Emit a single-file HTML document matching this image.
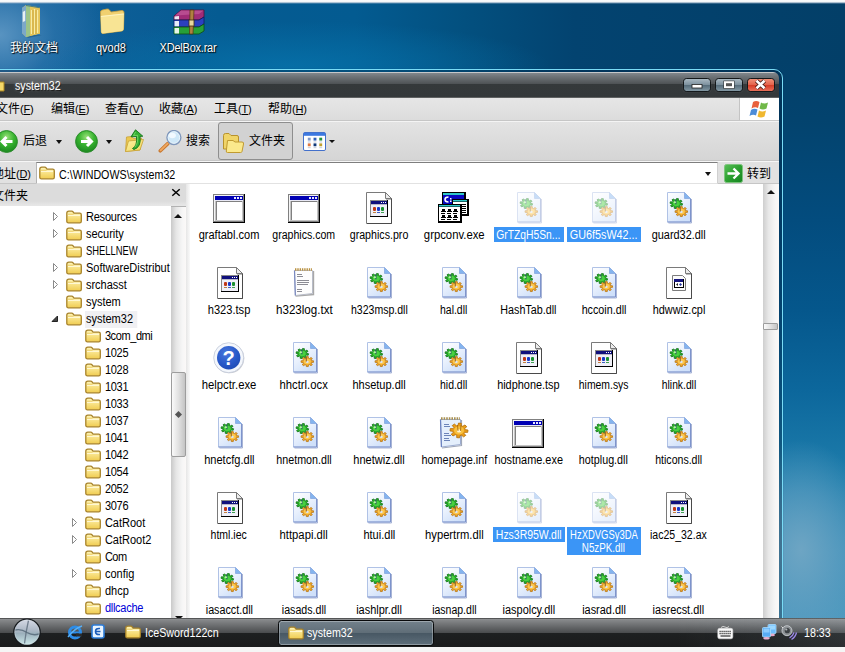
<!DOCTYPE html><html><head><meta charset="utf-8"><title>system32</title><style>html,body{margin:0;padding:0}
body{width:845px;height:652px;overflow:hidden;position:relative;background:#0a4b7c;font:11px "Liberation Sans","Noto Sans CJK SC",sans-serif;color:#000}
*{box-sizing:border-box}
#desk{position:absolute;left:0;top:0;width:845px;height:652px;
 background:
  radial-gradient(ellipse 260px 45px at 290px 66px,rgba(6,112,168,.9),rgba(4,104,160,0) 100%),
  radial-gradient(ellipse 110px 90px at 0px 35px,rgba(92,150,195,.95),rgba(50,120,175,.6) 50%,rgba(30,105,160,0) 100%),
  linear-gradient(90deg,#17649e 0%,#0e5e97 12%,#055b92 26%,#035b91 42%,#03507f 55%,#034370 68%,#033f68 100%);}
#rstrip{position:absolute;left:776px;top:60px;width:69px;height:558px;background:radial-gradient(ellipse 75px 110px at 25px 490px,rgba(112,166,196,.95),rgba(100,160,195,.55) 55%,rgba(60,140,185,0) 100%),linear-gradient(180deg,#03406a 0,#03436e 60px,#034c7e 160px,#05578c 250px,#0c679c 330px,#1f7eac 420px,#3c90b8 490px,#4a98bd 558px)}
#topline{position:absolute;left:0;top:0;width:845px;height:4px;background:linear-gradient(#fafbfc 0,#f2f4f6 2px,rgba(150,175,200,.7) 3px,rgba(60,110,160,0) 4px)}
.dicon{position:absolute;top:6px}
.dlabel{position:absolute;top:42px;width:90px;text-align:center;color:#fff;font-size:11px;line-height:13px;text-shadow:1px 1px 1px rgba(0,0,0,.9),0 0 2px rgba(0,0,0,.6)}
.dlabel{font-size:12px;transform:scaleX(.917);top:41.500px}
.dlabel.cn{font-size:12px;top:41.500px;transform:none}
#win{position:absolute;left:0;top:0;width:845px;height:618px;overflow:hidden}
#frame{position:absolute;left:-12px;top:69px;width:795px;height:600px;border:1px solid #7adcf6;border-radius:9px;background:rgba(0,25,50,.32);box-shadow:0 0 1px rgba(0,40,80,.5)}
#frame2{display:none}
#title{position:absolute;left:0;top:72px;width:779px;height:26px;border-radius:0 6px 0 0;background:linear-gradient(#c6c8ca 0,#c6c8ca 1px,#81878c 1px,#6c7175 5px,#4e5255 12px,#35393b 12px,#34383a 25px,#8a8a8a 26px)}
#title .t{position:absolute;left:14.500px;top:6.800px;color:#fff;font-size:12px;line-height:14px;transform:scaleX(.89);transform-origin:0 50%;text-shadow:0 0 3px #fff8,1px 1px 1px #000}
.cb{position:absolute;top:77.5px;height:14px;width:28px;border-radius:3.5px;border:1.5px solid #14181a;box-shadow:0 0 1px rgba(255,255,255,.25)}
#bmin{left:683px;background:linear-gradient(#a9b8c2,#7d919e 48%,#566c7a 52%,#8297a3)}
#bmax{left:715px;background:linear-gradient(#a9b8c2,#7d919e 48%,#566c7a 52%,#8297a3)}
#bclose{left:747px;background:linear-gradient(#f09078,#e4644c 48%,#d63c26 52%,#e8705a)}
#menubar{position:absolute;left:0;top:98px;width:779px;height:23px;background:linear-gradient(#e6e6e6,#dcdcdc);border-bottom:1px solid #c6c6c6}
#menubar>span{position:absolute;top:4px;font-size:12px;line-height:14px;white-space:nowrap}
#flag{position:absolute;left:739px;top:98px;width:40px;height:23px;background:#fff;border-left:1px solid #c4c4c4;border-bottom:1px solid #c9c9c9}
#toolbar{position:absolute;left:0;top:121px;width:779px;height:40px;background:linear-gradient(#e3e3e3,#d5d5d5);border-top:1px solid #f4f4f4;border-bottom:1px solid #c6c6c6}
#toolbar .lb{position:absolute;font-size:12px;line-height:14px;top:12px;white-space:nowrap}
#addr{position:absolute;left:0;top:161px;width:779px;height:23px;background:#e1e1e1;border-top:1px solid #f6f6f6;border-bottom:1px solid #c6c6c6}
#addr .lb{position:absolute;font-size:12px;line-height:14px;white-space:nowrap}
#addrbox{position:absolute;left:36px;top:0px;width:682px;height:22px;background:#fff;border:1px solid #b4b4b4;border-top-color:#7e7e7e;border-bottom-color:#e2e2e2;border-right-color:#d0d0d0}
#addrbox .p{position:absolute;left:21.600px;top:4.500px;font-size:12px;line-height:14px;white-space:nowrap;transform:scaleX(.89);transform-origin:0 50%}
#fhead{position:absolute;left:0;top:184px;width:186px;height:23px;background:linear-gradient(#dcdcdc 0,#dcdcdc 17px,#e6e6e6 21px);border-bottom:1px solid #b2b2b2}
#fhead .lb{position:absolute;left:-8px;top:5px;font-size:12px;line-height:14px}
#split{position:absolute;left:186px;top:184px;width:4px;height:434px;background:linear-gradient(90deg,#e6e6e6,#fafafa)}
#tree{position:absolute;left:0;top:206px;width:171px;height:412px;background:#fff;overflow:hidden}
#tree .tw,#tree .tf{position:absolute}
#tree .tl{position:absolute;font-size:12px;line-height:15px;white-space:nowrap;padding:0 1px;transform:scaleX(.917);transform-origin:0 50%}
#tree .tl.blue{color:#0000d8}
#tree .tl.tsel{background:#f0f0f3;padding:1px 5px 1px 1px;margin-top:-1px}
#treesb{position:absolute;left:171px;top:207px;width:15px;height:411px;background:linear-gradient(90deg,#c9c9c9,#e6e6e6 35%,#f6f6f6 75%,#fbf9f8)}
#files{position:absolute;left:190px;top:184px;width:573px;height:434px;background:#fff;overflow:hidden}
#files .ic{position:absolute}
#files .fl{position:absolute;width:100px;text-align:center;font-size:12px;line-height:13px;white-space:nowrap}
#files .fl span.b{padding:1px 3px;display:inline-block}
#files .fl span.b.sel{background:#3b95f6;color:#fff}
#filesb{position:absolute;left:763px;top:184px;width:16px;height:434px;background:linear-gradient(90deg,#cecece,#e8e8e8 35%,#f6f6f6 75%,#fcf9f7)}
.sbup,.sbdn{position:absolute;left:0;width:100%;height:17px}
.sbup{top:0}.sbdn{bottom:0}#treesb .sbdn{bottom:-10px}#treesb .sbup:after{top:7px}
.sbup:after{content:"";position:absolute;left:50%;top:6px;margin-left:-4.5px;border:4px solid transparent;border-top:0;border-bottom:4px solid #111}
.sbdn:after{content:"";position:absolute;left:50%;top:5px;margin-left:-4px;border:4px solid transparent;border-bottom:0;border-top:4px solid #111}
.thumb{position:absolute;left:0;width:100%;border:1px solid #9d9d9d;border-radius:2px;background:linear-gradient(90deg,#fafafa,#e1e1e1 50%,#c4c4c4)}
#treesb .thumb{top:165px;height:85px}
#filesb .thumb{top:139px;height:7px;width:14.500px;border-radius:1px}
#taskbar{position:absolute;left:0;top:618px;width:845px;height:29.300px;background:linear-gradient(90deg,rgba(255,255,255,0) 0,rgba(255,255,255,0) 80%,rgba(200,225,240,.1) 100%),linear-gradient(#2c2c2c 0,#8e9092 1.200px,#86888a 2px,#6e7072 7px,#4b4d4f 14.500px,#1e2021 14.500px,#1a1b1c 29px)}
#taskbar .lb{position:absolute;color:#fff;font-size:12px;line-height:14px;top:7.500px;white-space:nowrap;transform:scaleX(.89);transform-origin:0 50%}
#under{position:absolute;left:0;top:647.3px;width:845px;height:5px;background:#f5f5f5}
#tbtn{position:absolute;left:277.500px;top:2px;width:156.500px;height:26px;border:1.500px solid #08090a;border-radius:3.500px;background:linear-gradient(#73818b,#606e78 48%,#485864 52%,#5e6e7a);box-shadow:inset 0 0 0 1px rgba(255,255,255,.3)}
.dd{position:absolute;width:0;height:0;border:3.5px solid transparent;border-bottom:0;border-top:4px solid #111}
.dd.s{border-width:2.5px;border-top-width:3px}
#fbtn{position:absolute;left:218px;top:0px;width:75px;height:38px;border:1px solid #8e8e8e;border-radius:3px;background:#d2d2d2}
.la{font-size:11px;letter-spacing:-.2px}
.la u{text-decoration:underline;text-underline-offset:1px}
#treesb .thumb i{position:absolute;left:50%;top:50%;width:5px;height:5px;margin:-3px 0 0 -2.500px;background:#555;transform:rotate(45deg)}
.dd.m{border-width:3px;border-top-width:3.500px;border-bottom:0}
.sx{display:inline-block;white-space:nowrap}
#files .sx{position:relative;top:1px}
</style></head><body>
<svg width="0" height="0" style="position:absolute"><defs>
<linearGradient id="gfold" x1="0" y1="0" x2="0" y2="1"><stop offset="0" stop-color="#fff6b8"/><stop offset="1" stop-color="#f0cc50"/></linearGradient>
<g id="fold"><path d="M0.800 3.200 Q0.800 1.200 2.800 1.200 L5.600 1.200 Q6.600 1.200 7.300 2.200 L8 3.200 L13.700 3.200 Q15.300 3.200 15.300 4.800 L15.300 11.200 Q15.300 12.800 13.700 12.800 L2.400 12.800 Q0.800 12.800 0.800 11.200 Z" fill="url(#gfold)" stroke="#a8832a" stroke-width="1.300"/><path d="M2 5.300 L14 5.300" stroke="#fffbe0" stroke-width="1.100"/><path d="M1.800 4.300 L7.500 4.300" stroke="#e8c860" stroke-width=".8"/></g>
<g id="i-win"><rect x="0" y="2" width="32" height="29" fill="#000"/><rect x="0" y="2" width="31" height="28" fill="#808080"/><rect x="1" y="3" width="30" height="27" fill="#808080"/><rect x="1" y="3" width="29" height="26" fill="#f4f4f4"/><rect x="2" y="4" width="28" height="25" fill="#c4c4c4"/><rect x="2" y="4" width="28" height="4" fill="#0000b4"/><rect x="2" y="8" width="28" height="1" fill="#e8e8f4"/><rect x="3" y="9" width="26" height="19" fill="#808080"/><rect x="4" y="10" width="25" height="18" fill="#fff"/><rect x="21" y="5" width="2" height="2" fill="#e8e8ff"/><rect x="24" y="5" width="2" height="2" fill="#e8e8ff"/><rect x="27" y="5" width="2" height="2" fill="#e8e8ff"/></g>
<g id="page"><path d="M4.500 0.500 L23.500 0.500 L29.500 6.500 L29.500 31.500 L4.500 31.500 Z" fill="#fff" stroke="#7a7a7a"/><path d="M29.500 6 L29.500 31.500 L5 31.500" fill="none" stroke="#4a4a4a"/><path d="M23.500 0.500 L23.500 6.500 L29.500 6.500 Z" fill="#ececec" stroke="#7a7a7a"/><path d="M24 7.500 L29 7.500" stroke="#bbb"/></g>
<g id="miniwin"><rect x="8" y="8" width="18" height="17" fill="#000"/><rect x="8" y="8" width="17" height="16" fill="#888"/><rect x="9" y="9" width="16" height="15" fill="#f0f0f8"/><rect x="9" y="9" width="16" height="3" fill="#10107c"/><rect x="19" y="10" width="1" height="1" fill="#fff"/><rect x="21" y="10" width="1" height="1" fill="#fff"/><rect x="23" y="10" width="1" height="1" fill="#fff"/><rect x="9" y="12" width="16" height="1" fill="#b8b8c8"/><rect x="11" y="15" width="3" height="4" rx="1" fill="#c03818"/><rect x="15" y="15" width="3" height="4" rx="1" fill="#1838c8"/><rect x="19" y="15" width="3" height="4" rx="1" fill="#189030"/><rect x="11" y="20" width="3" height="1" fill="#c08040"/><rect x="15" y="20" width="3" height="1" fill="#4060c0"/><rect x="19" y="20" width="3" height="1" fill="#40a050"/></g>
<g id="i-pic"><use href="#page"/><use href="#miniwin"/></g>
<g id="i-cpl"><use href="#page"/><path d="M10.500 8.500 L20.500 8.500 L23.500 11.500 L23.500 23.500 L10.500 23.500 Z" fill="#fbfbfb" stroke="#7c7c7c"/><rect x="12" y="12" width="10" height="9" fill="#000"/><rect x="12" y="12" width="9" height="3" fill="#14147c"/><rect x="13" y="15" width="8" height="5" fill="#fff"/><path d="M14 17.500 l2 -1.500 v3 z" fill="#222"/><path d="M18.500 16 l1.500 1.500 l-1.500 1.500 l-1.500 -1.500 z" fill="#2838a0"/></g>
<linearGradient id="gdll" x1="0" y1="0" x2=".6" y2="1"><stop offset="0" stop-color="#ffffff"/><stop offset=".5" stop-color="#ebf2fd"/><stop offset="1" stop-color="#cfe0fa"/></linearGradient>
<g id="i-dll"><path d="M6.500 31 L29.500 31 L29.500 7" fill="none" stroke="#8c9cc8" stroke-opacity=".75"/><path d="M5.500 0.500 L22.500 0.500 L28.500 6.500 L28.500 30 L5.500 30 Z" fill="url(#gdll)" stroke="#b0c2e6"/><path d="M28.500 6.500 L28.500 30 L5.500 30" fill="none" stroke="#7e94cc"/><path d="M22.500 0.500 L22.500 6.500 L28.500 6.500 Z" fill="#84b4ee" stroke="#90b0e4"/>
<g transform="translate(0,2.3) scale(1,.8)"><path d="M20.59 11.77 L20.20 13.70 L18.25 13.43 L17.58 14.43 L18.56 16.14 L16.92 17.23 L15.73 15.66 L14.54 15.89 L14.03 17.79 L12.10 17.40 L12.37 15.45 L11.37 14.78 L9.66 15.76 L8.57 14.12 L10.14 12.93 L9.91 11.74 L8.01 11.23 L8.40 9.30 L10.35 9.57 L11.02 8.57 L10.04 6.86 L11.68 5.77 L12.87 7.34 L14.06 7.11 L14.57 5.21 L16.50 5.60 L16.23 7.55 L17.23 8.22 L18.94 7.24 L20.03 8.88 L18.46 10.07 L18.69 11.26 Z" fill="#28b028" stroke="#107418" stroke-width=".9"/><circle cx="14.300" cy="11.500" r="3.400" fill="#48d040"/><path d="M13.800 6.500 L13.800 12.500" stroke="#2c5c64" stroke-width="1.300"/><circle cx="12.800" cy="10" r="1.300" fill="#b8f0a8"/></g>
<g transform="translate(0,3.9) scale(1,.8)"><path d="M25.52 18.61 L25.52 20.59 L23.56 20.71 L23.10 21.82 L24.40 23.30 L23.00 24.70 L21.52 23.40 L20.41 23.86 L20.29 25.82 L18.31 25.82 L18.19 23.86 L17.08 23.40 L15.60 24.70 L14.20 23.30 L15.50 21.82 L15.04 20.71 L13.08 20.59 L13.08 18.61 L15.04 18.49 L15.50 17.38 L14.20 15.90 L15.60 14.50 L17.08 15.80 L18.19 15.34 L18.31 13.38 L20.29 13.38 L20.41 15.34 L21.52 15.80 L23.00 14.50 L24.40 15.90 L23.10 17.38 L23.56 18.49 Z" fill="#f0a828" stroke="#b87818" stroke-width=".9"/><circle cx="19.300" cy="19.600" r="3.400" fill="#fcc850"/><circle cx="19.300" cy="20" r="1.400" fill="#d8e4f8"/><path d="M18.300 14 L18.300 19.500" stroke="#94682c" stroke-width="1.100"/></g></g>
<g id="i-grp"><rect x="5" y="0" width="24" height="14" fill="#000"/><rect x="6" y="1" width="21" height="2" fill="#30c8c8"/><rect x="6" y="3" width="21" height="11" fill="#0808c0"/><path d="M11.500 5 Q8 5 8 7.500 Q8 10 11.500 10" fill="none" stroke="#fff" stroke-width="1.600"/><rect x="13" y="6" width="1.500" height="1.500" fill="#fff"/><rect x="13" y="8.500" width="1.500" height="1.500" fill="#fff"/>
<rect x="15" y="7" width="17" height="17" fill="#000"/><rect x="16" y="8" width="14" height="1.500" fill="#30c8c8"/><rect x="16" y="10" width="14" height="12" fill="#fff"/><path d="M25 12.500 h4 M25 14.500 h4 M25 16.500 h4 M25 18.500 h4 M25 20.500 h4" stroke="#000" stroke-width="1"/>
<rect x="1" y="12" width="24" height="19" fill="#000"/><rect x="2" y="13" width="21" height="1.500" fill="#30c8c8"/><rect x="2" y="15" width="21" height="14" fill="#fff"/>
<g fill="#000"><rect x="5" y="17" width="3" height="2"/><rect x="11" y="17" width="3" height="2"/><rect x="17" y="17" width="3" height="2"/><rect x="4" y="19" width="5" height="1"/><rect x="10" y="19" width="5" height="1"/><rect x="16" y="19" width="5" height="1"/><rect x="4" y="21" width="4" height="1"/><rect x="10" y="21" width="4" height="1"/><rect x="16" y="21" width="4" height="1"/><rect x="5" y="23" width="3" height="2"/><rect x="11" y="23" width="3" height="2"/><rect x="17" y="23" width="3" height="2"/><rect x="4" y="25" width="5" height="1"/><rect x="10" y="25" width="5" height="1"/><rect x="16" y="25" width="5" height="1"/><rect x="4" y="27" width="4" height="1"/><rect x="10" y="27" width="4" height="1"/><rect x="16" y="27" width="4" height="1"/></g></g>
<g id="i-txt"><path d="M7.500 29 L25.500 27.500 L25.500 4" fill="none" stroke="#a8a8a8" stroke-width="1.400"/><path d="M6.500 3.500 L24.500 3.500 L24.500 26.500 L7.500 28.500 Z" fill="#fdfdfd" stroke="#b8bcc8"/><path d="M6.500 3.500 L7.300 28.500" stroke="#7888c0" stroke-width="1.200"/><path d="M7 2.500 h17" stroke="#b89040" stroke-width="2.400" stroke-dasharray="1.400 .9"/><path d="M9 7.500 h5 M9 9.500 h6 M9 13.500 h12 M9 15.500 h12 M9 17.500 h11 M9 22.500 h5 M9 24.500 h5" stroke="#8c8c94"/></g>
<radialGradient id="ghelp" cx=".4" cy=".3" r=".8"><stop offset="0" stop-color="#4878dc"/><stop offset=".6" stop-color="#2858c8"/><stop offset="1" stop-color="#1c48b0"/></radialGradient>
<g id="i-help"><circle cx="16.300" cy="16.300" r="15" fill="#b0b4bc" opacity=".7"/><circle cx="15.700" cy="15.700" r="15" fill="#f4f7fc" stroke="#c0c8d8" stroke-width=".8"/><circle cx="15.700" cy="15.800" r="11.700" fill="url(#ghelp)"/><text x="15.700" y="23" text-anchor="middle" font-family="Liberation Sans,sans-serif" font-weight="bold" font-size="20" fill="#fff">?</text></g>
<g id="i-inf"><path d="M5 31 L24.500 28.500 L24.500 3" fill="none" stroke="#a0a8b8" stroke-width="1.200"/><path d="M3.500 2.500 L23.500 2.500 L23.500 27.500 L4.500 30 Z" fill="#e4effc" stroke="#9cacd0"/><path d="M3.500 2.500 L4.400 30" stroke="#6880c0" stroke-width="1.200"/><path d="M4 1.500 h19" stroke="#a89050" stroke-width="2.600" stroke-dasharray="1.600 1"/><path d="M7 7.500 h5 M7 9.500 h6 M7 16.500 h5 M7 18.500 h7 M7 21.500 h5 M7 23.500 h6" stroke="#6c84b8"/>
<g transform="translate(0,2.4) scale(1,.82)"><path d="M30.99 12.99 L30.70 15.79 L27.91 15.69 L27.09 17.21 L28.72 19.49 L26.54 21.27 L24.63 19.23 L22.97 19.72 L22.51 22.49 L19.71 22.20 L19.81 19.41 L18.29 18.59 L16.01 20.22 L14.23 18.04 L16.27 16.13 L15.78 14.47 L13.01 14.01 L13.30 11.21 L16.09 11.31 L16.91 9.79 L15.28 7.51 L17.46 5.73 L19.37 7.77 L21.03 7.28 L21.49 4.51 L24.29 4.80 L24.19 7.59 L25.71 8.41 L27.99 6.78 L29.77 8.96 L27.73 10.87 L28.22 12.53 Z" fill="#e89c18" stroke="#b87410" stroke-width="1"/><circle cx="22" cy="13.500" r="5" fill="#f8c040"/><circle cx="22" cy="14" r="2" fill="#fff4d0"/><path d="M20.500 7 L21 14 M24 7 L23.500 14" stroke="#a86c10" stroke-width="1"/></g></g>
<radialGradient id="ggb" cx=".5" cy=".3" r=".7"><stop offset="0" stop-color="#98e078"/><stop offset=".5" stop-color="#38b430"/><stop offset="1" stop-color="#1c8820"/></radialGradient>
<g id="gball"><circle cx="12.500" cy="12.500" r="10.900" fill="url(#ggb)" stroke="#2a8c2a"/></g>
</defs></svg>
<div id="desk"></div><div id="rstrip"></div><div id="topline"></div>
<svg class="dicon" style="left:16px;top:4px" width="32" height="34" viewBox="0 0 32 34"><path d="M26 31 L12 34 L9 31 Z" fill="#0a3c60" opacity=".35"/><path d="M6 4 L10 1 L24 3.500 L24 29.500 L10 33 L6 29 Z" fill="#d8c460"/><path d="M6 4 L10 1.500 L10 33 L6 29 Z" fill="#7ca8c8"/><path d="M6.800 8 L9.200 6.500 L9.200 17 L6.800 18 Z" fill="#e8f0f4"/><path d="M10 1.500 L14 2.200 L14 32 L10 33 Z" fill="#9cc488"/><path d="M14 2.200 L24 3.800 L24 29.500 L14 32 Z" fill="#e4c458"/><path d="M15.500 6 L15.500 30 M18.500 5 L18.500 30 M21.500 6 L21.500 29" stroke="#f8eca4" stroke-width="1.300"/><path d="M17 6 L17 30 M20 6 L20 30" stroke="#c8a030" stroke-width=".8"/><path d="M10 1.500 L24 3.800" stroke="#2c6c80" stroke-width=".8"/></svg>
<div class="dlabel cn" style="left:-11px">我的文档</div>
<svg class="dicon" style="left:97px;top:7px" width="30" height="28" viewBox="0 0 30 28"><path d="M3.500 6 Q3 3.500 5.500 3 L10 2 Q11.500 1.800 12.500 3 L14 5 L25 3.500 Q27 3.500 27 5.500 L26.500 22 Q26.500 23.500 25 24 L6 26.500 Q4.500 26.500 4.300 25 Z" fill="#f0d070" stroke="#c8a040" stroke-width=".8"/><path d="M3.800 9 L26.900 6.500 L26.500 22 Q26.500 23.500 25 24 L6 26.500 Q4.500 26.500 4.300 25 Z" fill="#f8e494"/><path d="M4 9.500 L26.800 7" stroke="#fff4c0" stroke-width="1"/></svg>
<div class="dlabel" style="left:66px">qvod8</div>
<svg class="dicon" style="left:173px;top:8px" width="33" height="27" viewBox="0 0 33 27"><path d="M1 8 L8 2 L31 2 L31 9 L26 12 L1 12 Z" fill="#a02c78" stroke="#501038" stroke-width=".8"/><path d="M8 2.500 L30.500 2.500 L26 6 L2 7.500 Z" fill="#b84c90"/><path d="M1.500 8.500 L6 8 L6 11.500 L1.500 11.500 Z" fill="#f0e8f0"/><path d="M1 12 L26 12 L31 9 L31 16 L26 19 L1 19 Z" fill="#2c40c0" stroke="#101c60" stroke-width=".8"/><path d="M1.500 13 L6 13 L6 18.500 L1.500 18.500 Z" fill="#e8ecf8"/><path d="M1 19 L26 19 L31 16 L31 23 L26 26 L1 26 Z" fill="#28a038" stroke="#0c4c14" stroke-width=".8"/><path d="M1.500 20 L6 20 L6 25.500 L1.500 25.500 Z" fill="#e8f4e8"/><path d="M17 2 L21 2 L20 26 L16.500 26 Z" fill="#b08040" stroke="#503010" stroke-width=".7"/><rect x="16" y="12" width="5" height="6" fill="#e8d8a0" stroke="#403010" stroke-width=".8"/></svg>
<div class="dlabel" style="left:143px;letter-spacing:-.25px">XDelBox.rar</div>

<div id="win">
<div id="frame"></div><div id="frame2"></div>
<div id="title"><svg style="position:absolute;left:-10px;top:5px" width="16" height="16"><path d="M1 3 L6 3 L8 5 L14 5 L14 14 L1 14 Z" fill="#f4d868" stroke="#a88420"/></svg><span class="t">system32</span></div>
<div class="cb" id="bmin"><svg width="25" height="11" style="position:absolute;left:1px;top:0.500px"><rect x="7" y="5.500" width="10" height="3.500" fill="#fff" stroke="#222" stroke-width=".8"/></svg></div>
<div class="cb" id="bmax"><svg width="25" height="11" style="position:absolute;left:1px;top:0.500px"><rect x="6.500" y="1.700" width="11" height="8" fill="#222"/><rect x="8" y="3.200" width="8" height="5" fill="#555" stroke="#fff" stroke-width="2"/></svg></div>
<div class="cb" id="bclose"><svg width="25" height="11" style="position:absolute;left:0;top:0"><path d="M8.500 1.800 L16.500 9.200 M16.500 1.800 L8.500 9.200" stroke="#3a1410" stroke-width="4.200"/><path d="M8.500 1.800 L16.500 9.200 M16.500 1.800 L8.500 9.200" stroke="#fff" stroke-width="2.600"/></svg></div>
<div id="menubar">
<span style="left:-4px">文件<span class="la">(<u>F</u>)</span></span><span style="left:51px">编辑<span class="la">(<u>E</u>)</span></span><span style="left:105px">查看<span class="la">(<u>V</u>)</span></span><span style="left:159px">收藏<span class="la">(<u>A</u>)</span></span><span style="left:214px">工具<span class="la">(<u>T</u>)</span></span><span style="left:268px">帮助<span class="la">(<u>H</u>)</span></span>
</div>
<div id="flag"><svg width="24" height="20" style="position:absolute;left:9px;top:1px" viewBox="0 0 24 20"><path d="M4 3 Q7 1 10.500 3 L9 9 Q6 7.500 2.500 9.500 Z" fill="#e8603c"/><path d="M12 3.500 Q15 5.500 19 3.500 L17.500 9.500 Q14 11.500 10.500 9.500 Z" fill="#70b848"/><path d="M2 11 Q5 9 8.500 10.500 L7 16.500 Q4 15 0.500 17 Z" fill="#4c8cd8"/><path d="M10 11.500 Q13 13.500 17 11.500 L15.500 17.500 Q12 19.500 8.500 17.500 Z" fill="#f0b830"/></svg></div>
<div id="toolbar">
<svg style="position:absolute;left:-6px;top:6.500px" width="25" height="25"><use href="#gball"/><path d="M18.500 12.500 H8.500 M12.500 8 L8 12.500 L12.500 17" fill="none" stroke="#fff" stroke-width="3"/></svg>
<span class="lb" style="left:23px">后退</span>
<i class="dd" style="left:56px;top:18px"></i>
<svg style="position:absolute;left:73.700px;top:6.500px" width="25" height="25"><use href="#gball"/><path d="M7 12.500 H17 M13 8 L17.500 12.500 L13 17" fill="none" stroke="#fff" stroke-width="3"/></svg>
<i class="dd" style="left:106px;top:18px"></i>
<svg style="position:absolute;left:124px;top:7px" width="21" height="24" viewBox="0 0 21 24"><defs><linearGradient id="gupf" x1="0" y1="0" x2="1" y2="1"><stop offset="0" stop-color="#fdf4a8"/><stop offset="1" stop-color="#f0d458"/></linearGradient></defs><path d="M2.500 8 L8 7.500 L9.500 9.500 L17.500 9 L16 21 L1.500 22.500 Z" fill="#ecc850" stroke="#c8a238" stroke-width=".8"/><path d="M1.500 22.500 L4.500 12 L19.500 10.500 L16 21 Z" fill="url(#gupf)" stroke="#c8a238" stroke-width=".8"/><path d="M8.500 19.500 Q13.500 17 12.500 7.500 L7 7.800 L11.500 0.800 L18.800 7.200 L16 7.400 Q17.500 18 10 20.500 Z" fill="#34b034" stroke="#147418" stroke-width=".9"/><path d="M11.500 3 L9.500 6.500 L13.500 6.300 Q14.500 14 11 18" fill="none" stroke="#7cdc6c" stroke-width="1" opacity=".8"/></svg>
<svg style="position:absolute;left:158px;top:8px" width="25" height="25" viewBox="0 0 25 25"><path d="M2.300 20.800 L9.800 13.600" stroke="#c87830" stroke-width="3.600" stroke-linecap="round"/><path d="M2.600 20.300 L9.800 13.400" stroke="#f0a860" stroke-width="1.800" stroke-linecap="round"/><circle cx="15.900" cy="7.500" r="6.900" fill="#cfe8f8" stroke="#8098bc" stroke-width="1.500"/><circle cx="15.900" cy="7.500" r="5.800" fill="none" stroke="#e8f4fc" stroke-width="1"/><ellipse cx="14.300" cy="5.500" rx="3.600" ry="2.800" fill="#f4fbff" opacity=".9"/></svg>
<span class="lb" style="left:186px">搜索</span>
<div id="fbtn"></div>
<svg style="position:absolute;left:222px;top:10px" width="24" height="22" viewBox="0 0 24 22"><path d="M1.500 3.500 Q1.500 1.500 3.500 1.500 L7 1.500 L9 3.500 L15 3.500 Q16.500 3.500 16.500 5 L16.500 17 L1.500 17 Z" fill="#f0d468" stroke="#b8922c"/><path d="M5.500 8.500 L11 8.500 L13 10 L20 10 Q22 10 21.500 12 L20 19.500 Q19.800 20.500 18.500 20.500 L5.500 20.500 Q4 20.500 4.300 19 Z" fill="#fbe98c" stroke="#c09a30"/></svg>
<span class="lb" style="left:249px">文件夹</span>
<svg style="position:absolute;left:303px;top:9.500px" width="23" height="19" viewBox="0 0 24 20" preserveAspectRatio="none"><rect x="0.500" y="0.500" width="23" height="19" rx="1.500" fill="#fff" stroke="#3868c8"/><rect x="1" y="1" width="22" height="3" fill="#3c78e0"/><rect x="5" y="6" width="3" height="3" fill="#8098c8"/><rect x="11" y="6" width="3" height="3" fill="#3060b8"/><rect x="17" y="6" width="3" height="3" fill="#209040"/><rect x="5" y="12" width="3" height="3" fill="#e07840"/><rect x="11" y="12" width="3" height="3" fill="#103878"/><rect x="17" y="12" width="3" height="3" fill="#c0a030"/><path d="M5 10.500 h3 M11 10.500 h3 M17 10.500 h3 M5 16.500 h3 M11 16.500 h3 M17 16.500 h3" stroke="#c0c8d8"/></svg>
<i class="dd m" style="left:328.500px;top:17.500px"></i>
</div>
<div id="addr">
<span class="lb" style="left:-8px;top:5px">地址<span class="la">(<u>D</u>)</span></span>
<div id="addrbox"><svg style="position:absolute;left:2px;top:3px" width="16" height="14"><use href="#fold"/></svg><span class="p">C:\WINDOWS\system32</span><i class="dd" style="left:668px;top:9px"></i></div>
<svg style="position:absolute;left:723.500px;top:1.500px" width="19" height="19"><defs><linearGradient id="ggo" x1="0" y1="0" x2="1" y2="1"><stop offset="0" stop-color="#58c058"/><stop offset=".5" stop-color="#2ca030"/><stop offset="1" stop-color="#148420"/></linearGradient></defs><rect x=".5" y=".5" width="18" height="18" rx="2" fill="url(#ggo)" stroke="#7cc47c"/><path d="M3.500 9.500 H14 M9.500 4.500 L14.500 9.500 L9.500 14.500" fill="none" stroke="#fff" stroke-width="2.400"/></svg>
<span class="lb" style="left:747px;top:5px">转到</span>
</div>
<div id="fhead"><span class="lb">文件夹</span><svg style="position:absolute;left:171px;top:4px" width="10" height="10"><path d="M1.300 1.300 L8.700 7.700 M8.700 1.300 L1.300 7.700" stroke="#000" stroke-width="1.500"/></svg></div>
<div id="split"></div>

<div id="tree">
<svg class="tw" style="left:52px;top:5.5px" width="7" height="9"><path d="M1.5 0.5 L5.5 4.5 L1.5 8.5 Z" fill="#fff" stroke="#8a8a8a"/></svg><svg class="tf" style="left:66px;top:3.5px" width="16" height="14"><use href="#fold"/></svg><span class="tl" style="left:85px;top:4.2px;letter-spacing:-0.2px">Resources</span>
<svg class="tw" style="left:52px;top:22.5px" width="7" height="9"><path d="M1.5 0.5 L5.5 4.5 L1.5 8.5 Z" fill="#fff" stroke="#8a8a8a"/></svg><svg class="tf" style="left:66px;top:20.5px" width="16" height="14"><use href="#fold"/></svg><span class="tl" style="left:85px;top:21.2px;letter-spacing:0px">security</span>
<svg class="tf" style="left:66px;top:37.5px" width="16" height="14"><use href="#fold"/></svg><span class="tl" style="left:85px;top:38.2px;letter-spacing:0px"><span class="sx" style="transform:scaleX(.855);transform-origin:0 50%;margin-right:-9px">SHELLNEW</span></span>
<svg class="tw" style="left:52px;top:56.5px" width="7" height="9"><path d="M1.5 0.5 L5.5 4.5 L1.5 8.5 Z" fill="#fff" stroke="#8a8a8a"/></svg><svg class="tf" style="left:66px;top:54.5px" width="16" height="14"><use href="#fold"/></svg><span class="tl" style="left:85px;top:55.2px;letter-spacing:0px">SoftwareDistribut</span>
<svg class="tw" style="left:52px;top:73.5px" width="7" height="9"><path d="M1.5 0.5 L5.5 4.5 L1.5 8.5 Z" fill="#fff" stroke="#8a8a8a"/></svg><svg class="tf" style="left:66px;top:71.5px" width="16" height="14"><use href="#fold"/></svg><span class="tl" style="left:85px;top:72.2px;letter-spacing:0px">srchasst</span>
<svg class="tf" style="left:66px;top:88.5px" width="16" height="14"><use href="#fold"/></svg><span class="tl" style="left:85px;top:89.2px;letter-spacing:0px">system</span>
<svg class="tw" style="left:51px;top:108.5px" width="8" height="8"><path d="M6.5 1 L6.5 6.5 L1 6.5 Z" fill="#444" stroke="#222" stroke-width="1"/></svg><svg class="tf" style="left:66px;top:105.5px" width="16" height="14"><use href="#fold"/></svg><span class="tl tsel" style="left:85px;top:106.2px;letter-spacing:0px">system32</span>
<svg class="tf" style="left:85px;top:122.5px" width="16" height="14"><use href="#fold"/></svg><span class="tl" style="left:104px;top:123.2px;letter-spacing:-0.45px">3com_dmi</span>
<svg class="tf" style="left:85px;top:139.5px" width="16" height="14"><use href="#fold"/></svg><span class="tl" style="left:104px;top:140.2px;letter-spacing:-0.3px">1025</span>
<svg class="tf" style="left:85px;top:156.5px" width="16" height="14"><use href="#fold"/></svg><span class="tl" style="left:104px;top:157.2px;letter-spacing:-0.3px">1028</span>
<svg class="tf" style="left:85px;top:173.5px" width="16" height="14"><use href="#fold"/></svg><span class="tl" style="left:104px;top:174.2px;letter-spacing:-0.3px">1031</span>
<svg class="tf" style="left:85px;top:190.5px" width="16" height="14"><use href="#fold"/></svg><span class="tl" style="left:104px;top:191.2px;letter-spacing:-0.3px">1033</span>
<svg class="tf" style="left:85px;top:207.5px" width="16" height="14"><use href="#fold"/></svg><span class="tl" style="left:104px;top:208.2px;letter-spacing:-0.3px">1037</span>
<svg class="tf" style="left:85px;top:224.5px" width="16" height="14"><use href="#fold"/></svg><span class="tl" style="left:104px;top:225.2px;letter-spacing:-0.3px">1041</span>
<svg class="tf" style="left:85px;top:241.5px" width="16" height="14"><use href="#fold"/></svg><span class="tl" style="left:104px;top:242.2px;letter-spacing:-0.3px">1042</span>
<svg class="tf" style="left:85px;top:258.5px" width="16" height="14"><use href="#fold"/></svg><span class="tl" style="left:104px;top:259.2px;letter-spacing:-0.3px">1054</span>
<svg class="tf" style="left:85px;top:275.5px" width="16" height="14"><use href="#fold"/></svg><span class="tl" style="left:104px;top:276.2px;letter-spacing:-0.3px">2052</span>
<svg class="tf" style="left:85px;top:292.5px" width="16" height="14"><use href="#fold"/></svg><span class="tl" style="left:104px;top:293.2px;letter-spacing:-0.3px">3076</span>
<svg class="tw" style="left:71px;top:311.5px" width="7" height="9"><path d="M1.5 0.5 L5.5 4.5 L1.5 8.5 Z" fill="#fff" stroke="#8a8a8a"/></svg><svg class="tf" style="left:85px;top:309.5px" width="16" height="14"><use href="#fold"/></svg><span class="tl" style="left:104px;top:310.2px;letter-spacing:0px">CatRoot</span>
<svg class="tw" style="left:71px;top:328.5px" width="7" height="9"><path d="M1.5 0.5 L5.5 4.5 L1.5 8.5 Z" fill="#fff" stroke="#8a8a8a"/></svg><svg class="tf" style="left:85px;top:326.5px" width="16" height="14"><use href="#fold"/></svg><span class="tl" style="left:104px;top:327.2px;letter-spacing:0px">CatRoot2</span>
<svg class="tf" style="left:85px;top:343.5px" width="16" height="14"><use href="#fold"/></svg><span class="tl" style="left:104px;top:344.2px;letter-spacing:-0.6px">Com</span>
<svg class="tw" style="left:71px;top:362.5px" width="7" height="9"><path d="M1.5 0.5 L5.5 4.5 L1.5 8.5 Z" fill="#fff" stroke="#8a8a8a"/></svg><svg class="tf" style="left:85px;top:360.5px" width="16" height="14"><use href="#fold"/></svg><span class="tl" style="left:104px;top:361.2px;letter-spacing:0px">config</span>
<svg class="tf" style="left:85px;top:377.5px" width="16" height="14"><use href="#fold"/></svg><span class="tl" style="left:104px;top:378.2px;letter-spacing:0px">dhcp</span>
<svg class="tf" style="left:85px;top:394.5px" width="16" height="14"><use href="#fold"/></svg><span class="tl blue" style="left:104px;top:395.2px;letter-spacing:-0.3px">dllcache</span>
</div>
<div id="treesb"><div class="sbup"></div><div class="thumb"><i></i></div><div class="sbdn"></div></div>
<div id="files">
<svg class="ic" style="left:23.0px;top:8.0px" width="32" height="32"><use href="#i-win"/></svg>
<div class="fl" style="left:-11.0px;top:43px"><span class="b"><span class="sx" style="transform:scaleX(0.919);margin:0 -2.67px">graftabl.com</span></span></div>
<svg class="ic" style="left:98.0px;top:8.0px" width="32" height="32"><use href="#i-win"/></svg>
<div class="fl" style="left:63.9px;top:43px"><span class="b"><span class="sx" style="transform:scaleX(0.880);margin:0 -4.29px">graphics.com</span></span></div>
<svg class="ic" style="left:172.0px;top:8.0px" width="32" height="32"><use href="#i-pic"/></svg>
<div class="fl" style="left:138.9px;top:43px"><span class="b"><span class="sx" style="transform:scaleX(0.887);margin:0 -3.72px">graphics.pro</span></span></div>
<svg class="ic" style="left:247.0px;top:8.0px" width="32" height="32"><use href="#i-grp"/></svg>
<div class="fl" style="left:213.9px;top:43px"><span class="b"><span class="sx" style="transform:scaleX(0.943);margin:0 -1.84px">grpconv.exe</span></span></div>
<svg class="ic" style="left:321.6px;top:8.0px;opacity:.45" width="32" height="32"><use href="#i-dll"/></svg>
<div class="fl" style="left:288.8px;top:43px"><span class="b sel"><span class="sx" style="transform:scaleX(0.857);margin:0 -5.34px">GrTZqH5Sn...</span></span></div>
<svg class="ic" style="left:396.6px;top:8.0px;opacity:.45" width="32" height="32"><use href="#i-dll"/></svg>
<div class="fl" style="left:363.8px;top:43px"><span class="b sel"><span class="sx" style="transform:scaleX(0.900);margin:0 -3.78px">GU6f5sW42...</span></span></div>
<svg class="ic" style="left:471.6px;top:8.0px" width="32" height="32"><use href="#i-dll"/></svg>
<div class="fl" style="left:438.7px;top:43px"><span class="b"><span class="sx" style="transform:scaleX(0.909);margin:0 -2.70px">guard32.dll</span></span></div>
<svg class="ic" style="left:23.0px;top:82.9px" width="32" height="32"><use href="#i-pic"/></svg>
<div class="fl" style="left:-11.0px;top:118px"><span class="b"><span class="sx" style="transform:scaleX(0.925);margin:0 -1.72px">h323.tsp</span></span></div>
<svg class="ic" style="left:98.0px;top:82.9px" width="32" height="32"><use href="#i-txt"/></svg>
<div class="fl" style="left:63.9px;top:118px"><span class="b"><span class="sx" style="transform:scaleX(0.967);margin:0 -0.96px">h323log.txt</span></span></div>
<svg class="ic" style="left:172.0px;top:82.9px" width="32" height="32"><use href="#i-dll"/></svg>
<div class="fl" style="left:138.9px;top:118px"><span class="b"><span class="sx" style="transform:scaleX(0.878);margin:0 -3.96px">h323msp.dll</span></span></div>
<svg class="ic" style="left:247.0px;top:82.9px" width="32" height="32"><use href="#i-dll"/></svg>
<div class="fl" style="left:213.9px;top:118px"><span class="b"><span class="sx" style="transform:scaleX(0.871);margin:0 -2.03px">hal.dll</span></span></div>
<svg class="ic" style="left:321.6px;top:82.9px" width="32" height="32"><use href="#i-dll"/></svg>
<div class="fl" style="left:288.8px;top:118px"><span class="b"><span class="sx" style="transform:scaleX(0.895);margin:0 -3.30px">HashTab.dll</span></span></div>
<svg class="ic" style="left:396.6px;top:82.9px" width="32" height="32"><use href="#i-dll"/></svg>
<div class="fl" style="left:363.8px;top:118px"><span class="b"><span class="sx" style="transform:scaleX(0.895);margin:0 -2.62px">hccoin.dll</span></span></div>
<svg class="ic" style="left:471.6px;top:82.9px" width="32" height="32"><use href="#i-cpl"/></svg>
<div class="fl" style="left:438.7px;top:118px"><span class="b"><span class="sx" style="transform:scaleX(0.906);margin:0 -2.72px">hdwwiz.cpl</span></span></div>
<svg class="ic" style="left:23.0px;top:157.8px" width="32" height="32"><use href="#i-help"/></svg>
<div class="fl" style="left:-11.0px;top:193px"><span class="b"><span class="sx" style="transform:scaleX(0.942);margin:0 -1.67px">helpctr.exe</span></span></div>
<svg class="ic" style="left:98.0px;top:157.8px" width="32" height="32"><use href="#i-dll"/></svg>
<div class="fl" style="left:63.9px;top:193px"><span class="b"><span class="sx" style="transform:scaleX(0.938);margin:0 -1.58px">hhctrl.ocx</span></span></div>
<svg class="ic" style="left:172.0px;top:157.8px" width="32" height="32"><use href="#i-dll"/></svg>
<div class="fl" style="left:138.9px;top:193px"><span class="b"><span class="sx" style="transform:scaleX(0.918);margin:0 -2.37px">hhsetup.dll</span></span></div>
<svg class="ic" style="left:247.0px;top:157.8px" width="32" height="32"><use href="#i-dll"/></svg>
<div class="fl" style="left:213.9px;top:193px"><span class="b"><span class="sx" style="transform:scaleX(0.871);margin:0 -2.03px">hid.dll</span></span></div>
<svg class="ic" style="left:321.6px;top:157.8px" width="32" height="32"><use href="#i-pic"/></svg>
<div class="fl" style="left:288.8px;top:193px"><span class="b"><span class="sx" style="transform:scaleX(0.909);margin:0 -3.12px">hidphone.tsp</span></span></div>
<svg class="ic" style="left:396.6px;top:157.8px" width="32" height="32"><use href="#i-pic"/></svg>
<div class="fl" style="left:363.8px;top:193px"><span class="b"><span class="sx" style="transform:scaleX(0.867);margin:0 -3.82px">himem.sys</span></span></div>
<svg class="ic" style="left:471.6px;top:157.8px" width="32" height="32"><use href="#i-dll"/></svg>
<div class="fl" style="left:438.7px;top:193px"><span class="b"><span class="sx" style="transform:scaleX(0.859);margin:0 -2.82px">hlink.dll</span></span></div>
<svg class="ic" style="left:23.0px;top:232.7px" width="32" height="32"><use href="#i-dll"/></svg>
<div class="fl" style="left:-11.0px;top:268px"><span class="b"><span class="sx" style="transform:scaleX(0.921);margin:0 -2.15px">hnetcfg.dll</span></span></div>
<svg class="ic" style="left:98.0px;top:232.7px" width="32" height="32"><use href="#i-dll"/></svg>
<div class="fl" style="left:63.9px;top:268px"><span class="b"><span class="sx" style="transform:scaleX(0.893);margin:0 -3.32px">hnetmon.dll</span></span></div>
<svg class="ic" style="left:172.0px;top:232.7px" width="32" height="32"><use href="#i-dll"/></svg>
<div class="fl" style="left:138.9px;top:268px"><span class="b"><span class="sx" style="transform:scaleX(0.919);margin:0 -2.27px">hnetwiz.dll</span></span></div>
<svg class="ic" style="left:247.0px;top:232.7px" width="32" height="32"><use href="#i-inf"/></svg>
<div class="fl" style="left:213.9px;top:268px"><span class="b"><span class="sx" style="transform:scaleX(0.903);margin:0 -3.52px">homepage.inf</span></span></div>
<svg class="ic" style="left:321.6px;top:232.7px" width="32" height="32"><use href="#i-win"/></svg>
<div class="fl" style="left:288.8px;top:268px"><span class="b"><span class="sx" style="transform:scaleX(0.909);margin:0 -3.45px">hostname.exe</span></span></div>
<svg class="ic" style="left:396.6px;top:232.7px" width="32" height="32"><use href="#i-dll"/></svg>
<div class="fl" style="left:363.8px;top:268px"><span class="b"><span class="sx" style="transform:scaleX(0.895);margin:0 -2.86px">hotplug.dll</span></span></div>
<svg class="ic" style="left:471.6px;top:232.7px" width="32" height="32"><use href="#i-dll"/></svg>
<div class="fl" style="left:438.7px;top:268px"><span class="b"><span class="sx" style="transform:scaleX(0.881);margin:0 -3.19px">hticons.dll</span></span></div>
<svg class="ic" style="left:23.0px;top:307.6px" width="32" height="32"><use href="#i-pic"/></svg>
<div class="fl" style="left:-11.0px;top:343px"><span class="b"><span class="sx" style="transform:scaleX(0.876);margin:0 -2.57px">html.iec</span></span></div>
<svg class="ic" style="left:98.0px;top:307.6px" width="32" height="32"><use href="#i-dll"/></svg>
<div class="fl" style="left:63.9px;top:343px"><span class="b"><span class="sx" style="transform:scaleX(0.938);margin:0 -1.59px">httpapi.dll</span></span></div>
<svg class="ic" style="left:172.0px;top:307.6px" width="32" height="32"><use href="#i-dll"/></svg>
<div class="fl" style="left:138.9px;top:343px"><span class="b"><span class="sx" style="transform:scaleX(0.920);margin:0 -1.39px">htui.dll</span></span></div>
<svg class="ic" style="left:247.0px;top:307.6px" width="32" height="32"><use href="#i-dll"/></svg>
<div class="fl" style="left:213.9px;top:343px"><span class="b"><span class="sx" style="transform:scaleX(0.935);margin:0 -2.04px">hypertrm.dll</span></span></div>
<svg class="ic" style="left:321.6px;top:307.6px;opacity:.45" width="32" height="32"><use href="#i-dll"/></svg>
<div class="fl" style="left:288.8px;top:343px"><span class="b sel"><span class="sx" style="transform:scaleX(0.872);margin:0 -4.83px">Hzs3R95W.dll</span></span></div>
<svg class="ic" style="left:396.6px;top:307.6px;opacity:.45" width="32" height="32"><use href="#i-dll"/></svg>
<div class="fl" style="left:363.8px;top:343px"><span class="b sel"><span class="sx" style="transform:scaleX(0.788);margin:0 -9.12px">HzXDVGSy3DA</span><br><span class="sx" style="transform:scaleX(0.816);margin:0 -4.84px">N5zPK.dll</span></span></div>
<svg class="ic" style="left:471.6px;top:307.6px" width="32" height="32"><use href="#i-pic"/></svg>
<div class="fl" style="left:438.7px;top:343px"><span class="b"><span class="sx" style="transform:scaleX(0.878);margin:0 -3.96px">iac25_32.ax</span></span></div>
<svg class="ic" style="left:23.0px;top:382.5px" width="32" height="32"><use href="#i-dll"/></svg>
<div class="fl" style="left:-11.0px;top:418px"><span class="b"><span class="sx" style="transform:scaleX(0.896);margin:0 -2.74px">iasacct.dll</span></span></div>
<svg class="ic" style="left:98.0px;top:382.5px" width="32" height="32"><use href="#i-dll"/></svg>
<div class="fl" style="left:63.9px;top:418px"><span class="b"><span class="sx" style="transform:scaleX(0.887);margin:0 -2.82px">iasads.dll</span></span></div>
<svg class="ic" style="left:172.0px;top:382.5px" width="32" height="32"><use href="#i-dll"/></svg>
<div class="fl" style="left:138.9px;top:418px"><span class="b"><span class="sx" style="transform:scaleX(0.915);margin:0 -2.12px">iashlpr.dll</span></span></div>
<svg class="ic" style="left:247.0px;top:382.5px" width="32" height="32"><use href="#i-dll"/></svg>
<div class="fl" style="left:213.9px;top:418px"><span class="b"><span class="sx" style="transform:scaleX(0.876);margin:0 -3.15px">iasnap.dll</span></span></div>
<svg class="ic" style="left:321.6px;top:382.5px" width="32" height="32"><use href="#i-dll"/></svg>
<div class="fl" style="left:288.8px;top:418px"><span class="b"><span class="sx" style="transform:scaleX(0.910);margin:0 -2.61px">iaspolcy.dll</span></span></div>
<svg class="ic" style="left:396.6px;top:382.5px" width="32" height="32"><use href="#i-dll"/></svg>
<div class="fl" style="left:363.8px;top:418px"><span class="b"><span class="sx" style="transform:scaleX(0.910);margin:0 -2.17px">iasrad.dll</span></span></div>
<svg class="ic" style="left:471.6px;top:382.5px" width="32" height="32"><use href="#i-dll"/></svg>
<div class="fl" style="left:438.7px;top:418px"><span class="b"><span class="sx" style="transform:scaleX(0.908);margin:0 -2.59px">iasrecst.dll</span></span></div>
</div>
<div id="filesb"><div class="sbup"></div><div class="thumb"><i></i></div></div>
</div>
<div id="taskbar">
<svg style="position:absolute;left:12.800px;top:0.300px" width="28" height="28" viewBox="0 0 28 28"><defs><linearGradient id="gorb" x1="0" y1="0" x2="0" y2="1"><stop offset="0" stop-color="#d4d8e4"/><stop offset=".45" stop-color="#aab6c4"/><stop offset=".55" stop-color="#9cb0bc"/><stop offset="1" stop-color="#cce8ea"/></linearGradient></defs><circle cx="14" cy="14.200" r="13.800" fill="#14181c"/><circle cx="14" cy="14.200" r="12.400" fill="url(#gorb)"/><path d="M15.500 2.500 Q13 13 11.500 25.500" stroke="#5c6c7c" stroke-width="1.300" fill="none" opacity=".8"/><path d="M2 12 Q8 10.500 14 14.500 Q20 18 26 16" stroke="#566878" stroke-width="1.400" fill="none" opacity=".85"/><circle cx="14" cy="14.200" r="12.400" fill="none" stroke="#e8f0f4" stroke-opacity=".5" stroke-width=".8"/></svg>
<svg style="position:absolute;left:67px;top:6px" width="16" height="16"><circle cx="8" cy="8.500" r="5.500" fill="none" stroke="#2c8ce8" stroke-width="3"/><rect x="3" y="7.500" width="10" height="2" fill="#2c8ce8"/><rect x="9" y="9.500" width="6" height="3" fill="#2a2c2e"/><path d="M1 13 Q8 4 15 2" stroke="#58b0f8" stroke-width="1.400" fill="none"/></svg>
<svg style="position:absolute;left:91px;top:5px" width="14" height="16"><rect x="1" y="2" width="12" height="13" rx="2" fill="#e8f4ff" stroke="#2c7cd8" stroke-width="1.600"/><path d="M9 5.500 Q4.500 5 4.500 8.500 Q4.500 12 9 11.500 M5 8.500 H9.500" stroke="#1c5cb8" stroke-width="1.600" fill="none"/></svg>
<svg style="position:absolute;left:125px;top:7px" width="16" height="14"><use href="#fold"/></svg>
<span class="lb" style="left:145px">IceSword122cn</span>
<div id="tbtn"><svg style="position:absolute;left:9px;top:5px" width="16" height="14"><use href="#fold"/></svg><span class="lb" style="left:28px;top:5px">system32</span></div>
<svg style="position:absolute;left:717px;top:7px" width="17" height="15" viewBox="0 0 17 15"><path d="M4 2.500 Q6 0.500 8 2 Q10 3.500 12 1.500" fill="none" stroke="#d0d0d0" stroke-width="1"/><rect x="0.800" y="3.300" width="15" height="10.500" rx="1.800" fill="#fafafa" stroke="#d8d8d8" stroke-width=".6"/><path d="M2.500 6.300 h12 M2.500 8.500 h12" stroke="#303030" stroke-width="1.300" stroke-dasharray="1.200 .8"/><path d="M3.500 11 h10" stroke="#303030" stroke-width="1.200"/></svg>
<svg style="position:absolute;left:761px;top:5px" width="17" height="17" viewBox="0 0 17 17"><rect x="7" y="1.500" width="8" height="9" rx="1" fill="#6cbcfc" stroke="#a8dcff" stroke-width=".8"/><rect x="8" y="2.500" width="6" height="4" fill="#9cd8ff"/><ellipse cx="11" cy="12" rx="3" ry="1.300" fill="#e8a8c8"/><rect x="1.500" y="4.500" width="8" height="9.500" rx="1" fill="#58acf4" stroke="#a8dcff" stroke-width=".8"/><rect x="2.500" y="5.500" width="6" height="4" fill="#8cccff"/><ellipse cx="5.500" cy="15.300" rx="3.200" ry="1.300" fill="#e8b0d0"/></svg>
<svg style="position:absolute;left:780px;top:5px" width="19" height="19" viewBox="0 0 19 19"><circle cx="7" cy="7.700" r="5" fill="#8c9094" stroke="#c8ccd0" stroke-width=".9"/><circle cx="7.300" cy="7.700" r="2.600" fill="#3c4044"/><circle cx="6.300" cy="6.500" r="1.100" fill="#b0b4b8"/><path d="M1.500 3.500 L3 5" stroke="#e0e0e0" stroke-width="1"/><path d="M11.500 16.500 Q15.500 14 16.500 9.500 M9.500 15 Q13 13 14 9.500" stroke="#9c88e8" stroke-width="1.300" fill="none"/></svg>
<span class="lb" style="left:804px">18:33</span>
</div>
<div id="under"></div>

</body></html>
